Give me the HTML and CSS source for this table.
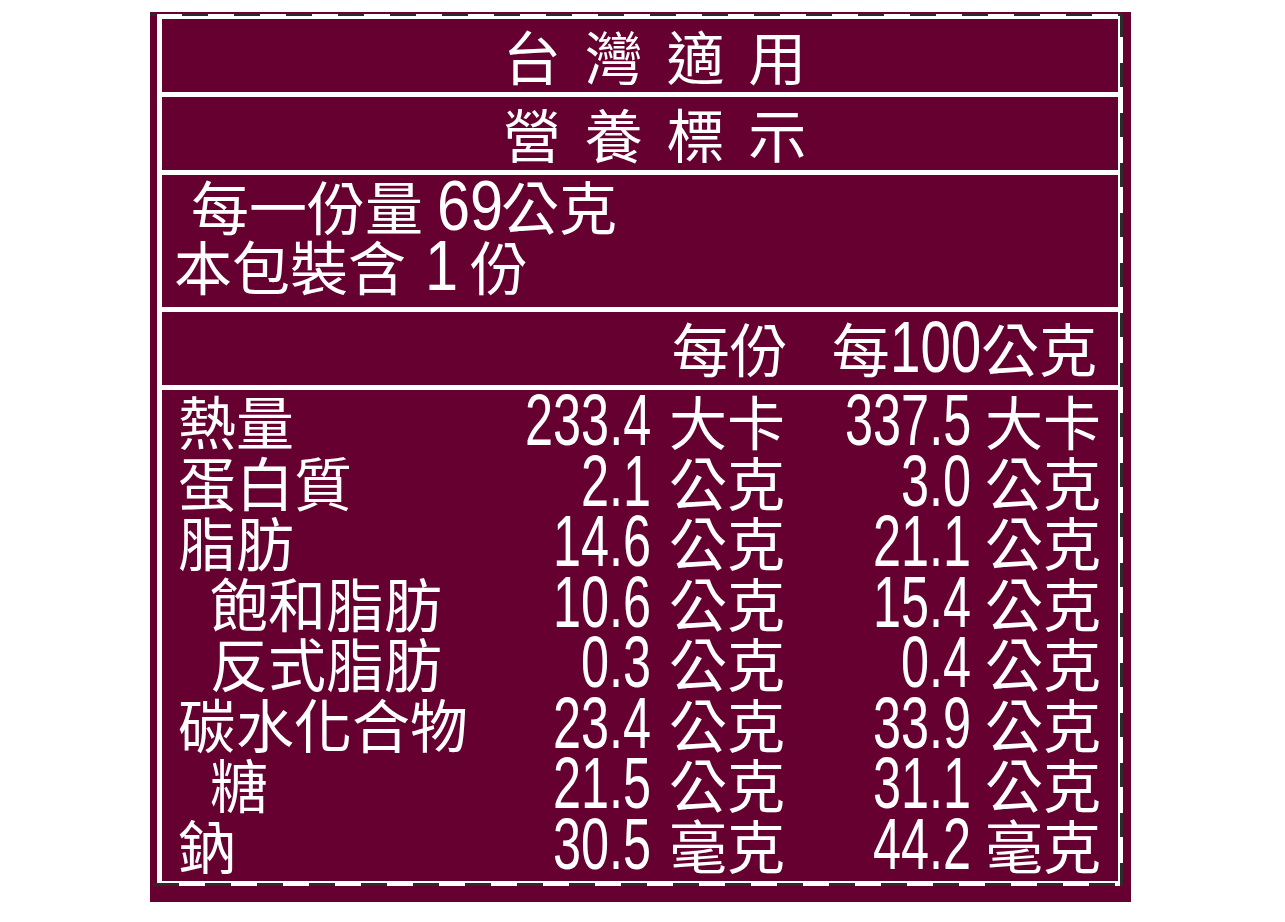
FILE: index.html
```html
<!DOCTYPE html>
<html lang="zh-Hant">
<head>
<meta charset="utf-8">
<title>營養標示</title>
<link rel="stylesheet" href="styles.css">
</head>
<body>
<div class="label">
  <div class="sheet">
    <div class="cell title">台灣適用</div>
    <div class="cell title">營養標示</div>
    <div class="cell serving">
      <div class="line first">每一份量 <span class="num n69">69</span>公克</div>
      <div class="line">本包裝含 <span class="num n1">1</span> 份</div>
    </div>
    <div class="cell head">
      <span class="h1">每份</span>
      <span class="h2">每<span class="num n100">100</span>公克</span>
    </div>
    <div class="cell data">
      <div class="lab">熱量</div><div class="v"><span class="num nd">233.4</span></div><div class="u1">大卡</div><div class="v"><span class="num nd">337.5</span></div><div class="u2">大卡</div>
      <div class="lab">蛋白質</div><div class="v"><span class="num nd">2.1</span></div><div class="u1">公克</div><div class="v"><span class="num nd">3.0</span></div><div class="u2">公克</div>
      <div class="lab">脂肪</div><div class="v"><span class="num nd">14.6</span></div><div class="u1">公克</div><div class="v"><span class="num nd">21.1</span></div><div class="u2">公克</div>
      <div class="lab sub">飽和脂肪</div><div class="v"><span class="num nd">10.6</span></div><div class="u1">公克</div><div class="v"><span class="num nd">15.4</span></div><div class="u2">公克</div>
      <div class="lab sub">反式脂肪</div><div class="v"><span class="num nd">0.3</span></div><div class="u1">公克</div><div class="v"><span class="num nd">0.4</span></div><div class="u2">公克</div>
      <div class="lab">碳水化合物</div><div class="v"><span class="num nd">23.4</span></div><div class="u1">公克</div><div class="v"><span class="num nd">33.9</span></div><div class="u2">公克</div>
      <div class="lab sub">糖</div><div class="v"><span class="num nd">21.5</span></div><div class="u1">公克</div><div class="v"><span class="num nd">31.1</span></div><div class="u2">公克</div>
      <div class="lab">鈉</div><div class="v"><span class="num nd">30.5</span></div><div class="u1">毫克</div><div class="v"><span class="num nd">44.2</span></div><div class="u2">毫克</div>
    </div>
  </div>
</div>
</body>
</html>
```
FILE: styles.css
```css
html, body {
  margin: 0;
  padding: 0;
  background: #ffffff;
}

.label {
  position: relative;
  margin: 12px 0 0 150px;
  width: 981px;
  height: 890px;
  box-sizing: border-box;
  padding: 2px 8px 16px 7px;
  background: #660030;
  color: #ffffff;
  font-family: "Noto Sans CJK TC", "Noto Sans CJK SC", sans-serif;
  font-size: 58px;
}

/* dashed cut line overlaying the white frame */
.label::after {
  content: "";
  position: absolute;
  left: 0;
  top: 1px;
  width: 973px;
  height: 873px;
  background:
    linear-gradient(to right, #2b2b2b 26px, transparent 26px) 32px 0 / 52px 3px repeat-x,
    linear-gradient(to right, #2b2b2b 26px, transparent 26px) 3px 100% / 52px 3px repeat-x,
    linear-gradient(to bottom, #2b2b2b 24px, transparent 24px) 100% 0 / 3px 50px repeat-y;
  pointer-events: none;
}

.sheet {
  display: flex;
  flex-direction: column;
  gap: 5px;
  width: 966px;
  height: 872px;
  box-sizing: border-box;
  padding: 5px;
  background: #ffffff;
}

.cell {
  background: #660030;
}

.title {
  height: 73px;
  line-height: 73px;
  text-align: center;
  letter-spacing: 23.7px;
  padding-left: 53px;
  white-space: nowrap;
}

.serving {
  height: 132px;
  box-sizing: border-box;
  padding: 0 0 0 12px;
}

.line {
  height: 60px;
  line-height: 60px;
  white-space: nowrap;
}

.line.first {
  padding-left: 17px;
}

.num {
  display: inline-block;
  font-family: "Liberation Sans", Arial, sans-serif;
}

.n69 {
  font-size: 70px;
  transform: scaleX(0.85);
  transform-origin: left center;
  margin-right: -14px;
  margin-left: 1px;
}

.n1 {
  font-size: 70px;
  transform: scaleX(0.85);
  transform-origin: left center;
  margin-right: -7px;
  margin-left: 6px;
}

.head {
  height: 73px;
  line-height: 70px;
  display: flex;
  justify-content: flex-end;
  gap: 44px;
  padding-right: 21px;
  white-space: nowrap;
}

.n100 {
  font-size: 72px;
  transform: scaleX(0.76);
  transform-origin: left center;
  margin-right: -29px;
}

.data {
  flex: 1;
  display: grid;
  grid-template-columns: 285px 188px 131px 189px 127px;
  grid-auto-rows: 60.5px;
  line-height: 60.5px;
  padding: 0 0 0 16px;
  white-space: nowrap;
}

.lab.sub {
  padding-left: 32px;
}

.v {
  text-align: right;
}

.nd {
  font-size: 72px;
  transform: scaleX(0.7);
  transform-origin: right center;
}

.u1 {
  padding-left: 18px;
}

.u2 {
  padding-left: 14px;
}
```
